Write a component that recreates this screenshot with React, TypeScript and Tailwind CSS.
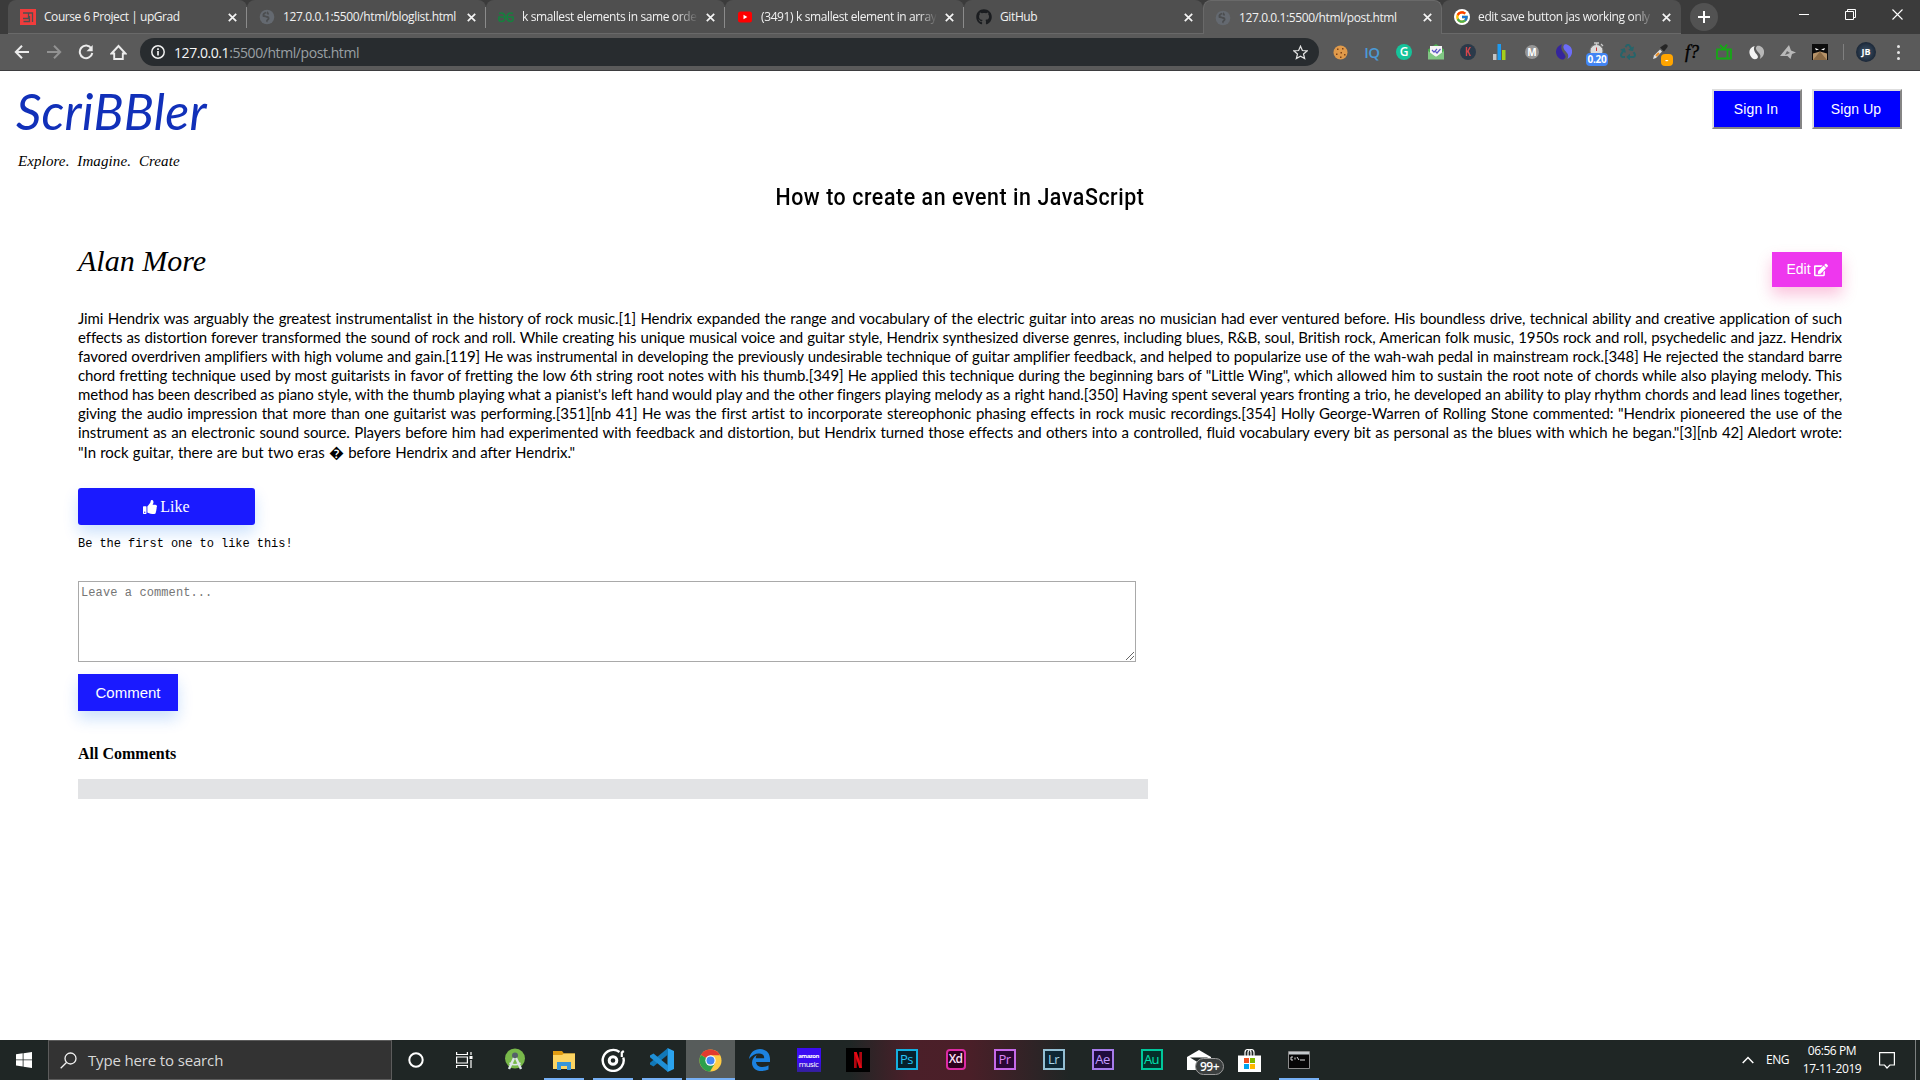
import React from "react";
import { FaThumbsUp, FaGithub, FaRecycle, FaEdit } from "react-icons/fa";
import { FcGoogle } from "react-icons/fc";

const lines = [
  "Jimi Hendrix was arguably the greatest instrumentalist in the history of rock music.[1] Hendrix expanded the range and vocabulary of the electric guitar into areas no musician had ever ventured before. His boundless drive, technical ability and creative application of such",
  "effects as distortion forever transformed the sound of rock and roll. While creating his unique musical voice and guitar style, Hendrix synthesized diverse genres, including blues, R&B, soul, British rock, American folk music, 1950s rock and roll, psychedelic and jazz. Hendrix",
  "favored overdriven amplifiers with high volume and gain.[119] He was instrumental in developing the previously undesirable technique of guitar amplifier feedback, and helped to popularize use of the wah-wah pedal in mainstream rock.[348] He rejected the standard barre",
  "chord fretting technique used by most guitarists in favor of fretting the low 6th string root notes with his thumb.[349] He applied this technique during the beginning bars of \"Little Wing\", which allowed him to sustain the root note of chords while also playing melody. This",
  "method has been described as piano style, with the thumb playing what a pianist's left hand would play and the other fingers playing melody as a right hand.[350] Having spent several years fronting a trio, he developed an ability to play rhythm chords and lead lines together,",
  "giving the audio impression that more than one guitarist was performing.[351][nb 41] He was the first artist to incorporate stereophonic phasing effects in rock music recordings.[354] Holly George-Warren of Rolling Stone commented: \"Hendrix pioneered the use of the",
  "instrument as an electronic sound source. Players before him had experimented with feedback and distortion, but Hendrix turned those effects and others into a controlled, fluid vocabulary every bit as personal as the blues with which he began.\"[3][nb 42] Aledort wrote:",
];

const Globe = () => (
  <svg width="16" height="16" viewBox="0 0 16 16">
    <circle cx="8" cy="8" r="7.3" fill="#646970" />
    <path d="M7 3.500C5 4 4 5.500 4.500 7c1.500-.2 2.400.8 4 1 1.500.3 1.400 2 .2 2.700-1 .6-.6 1.500-1.200 2M9 3c-1 1-.4 1.800.8 1.900" fill="none" stroke="#4c4e50" strokeWidth="1.800" />
  </svg>
);
const UpGrad = () => (
  <svg width="16" height="16" viewBox="0 0 16 16">
    <path fill="#f13c3c" d="M0 0h16v16H0z" />
    <path d="M3 4h9.500v9M8.500 4v5.500H3M9.500 7v5.500H3.500" fill="none" stroke="#4f4f4f" strokeWidth="1.300" />
  </svg>
);
const Geeks = () => (
  <svg width="16" height="16" viewBox="0 0 16 16" fill="none" stroke="#16803e" strokeWidth="1.600">
    <path d="M1 4.500c4-1.500 6 1 6 3.500s-1.500 4.500-4 4.500S.8 10.500 1 8h6M15 4.500c-4-1.500-6 1-6 3.500s1.500 4.500 4 4.500 2.200-2 2-4.500H9" />
  </svg>
);
const YouTube = () => (
  <svg width="16" height="16" viewBox="0 0 16 16">
    <rect x="1" y="2.500" width="14" height="11" rx="2.500" fill="#f00" />
    <path d="M6.500 5.800v4.400L10.300 8z" fill="#fff" />
  </svg>
);
const Google = () => (
  <span className="flex size-4 items-center justify-center rounded-full bg-white"><FcGoogle size={14} /></span>
);

const Close = () => (
  <svg className="shrink-0" width="9" height="9" viewBox="0 0 9 9"><path d="M.8.8l7.400 7.400M8.200.8L.8 8.200" stroke="#f4f4f4" strokeWidth="1.700" /></svg>
);

const tabs = [
  { icon: <UpGrad />, label: "Course 6 Project | upGrad", cls: "tracking-[-0.45px]" },
  { icon: <Globe />, label: "127.0.0.1:5500/html/bloglist.html", cls: "tracking-[-0.36px]" },
  { icon: <Geeks />, label: "k smallest elements in same orde", cls: "tracking-[-0.38px] [mask-image:linear-gradient(to_right,black_88%,transparent_100%)]" },
  { icon: <YouTube />, label: "(3491) k smallest element in array", cls: "tracking-[-0.38px] [mask-image:linear-gradient(to_right,black_90%,transparent_100%)]" },
  { icon: <FaGithub size={16} color="#1b1d20" />, label: "GitHub", cls: "tracking-[-0.38px]" },
  { icon: <Globe />, label: "127.0.0.1:5500/html/post.html", cls: "tracking-[-0.4px]", active: true },
  { icon: <Google />, label: "edit save button jas working only", cls: "tracking-[-0.36px] [mask-image:linear-gradient(to_right,black_88%,transparent_100%)]" },
];

function TabStrip() {
  return (
    <div className="flex h-[34px] bg-[#3b3b3b] pl-2">
      {tabs.map((t, i) => (
        <div
          key={i}
          className={
            "flex h-[34px] w-[239px] shrink-0 items-center rounded-t-lg " +
            (t.active ? "border-x border-t border-[#696969] bg-[#5a5a5a] pl-[11px] pr-[10px]" : "border-b border-[#696969] bg-[#4f4f4f] pl-3 pr-[11px] pt-px")
          }
        >
          <span className="flex w-4 shrink-0 justify-center">{t.icon}</span>
          <span className={"ml-2 w-[176px] shrink-0 whitespace-nowrap text-[12px] text-[#f1f1f1] " + t.cls}>{t.label}</span>
          <span className="ml-2"><Close /></span>
          {i < 4 && <span className="-mr-[11px] ml-auto h-[21px] w-px bg-[#8b8b8b]" />}
        </div>
      ))}
      <div className="ml-[9px] mt-[3px] flex size-7 items-center justify-center rounded-full bg-[#525252]">
        <svg width="12" height="12" viewBox="0 0 12 12"><path d="M6 0v12M0 6h12" stroke="#fff" strokeWidth="2" /></svg>
      </div>
      <div className="ml-auto flex h-7 items-center gap-9 pr-[17px]">
        <svg width="10" height="10" viewBox="0 0 10 10"><path d="M0 5.500h10" stroke="#fff" /></svg>
        <svg width="11" height="11" viewBox="0 0 11 11" fill="none" stroke="#fff"><path d="M.5 2.500h8v8h-8zM2.500 2.500v-2h8v8h-2" /></svg>
        <svg width="11" height="11" viewBox="0 0 11 11"><path d="M.5.5l10 10M10.500.5l-10 10" stroke="#fff" strokeWidth="1.100" /></svg>
      </div>
    </div>
  );
}

const Ext = ({ children }: { children: React.ReactNode }) => (
  <span className="relative flex h-7 w-8 shrink-0 items-center justify-center">{children}</span>
);

function Toolbar() {
  return (
    <div className="flex h-[37px] items-center border-b border-[#3d3d3f] bg-[#5a5a5a]">
      <div className="flex w-[140px] items-center gap-4 pl-[14px]">
        <svg width="16" height="16" viewBox="0 0 16 16" fill="none" stroke="#ececec" strokeWidth="2"><path d="M15 8H2.500M8 1.700L1.800 8 8 14.300" /></svg>
        <svg width="16" height="16" viewBox="0 0 16 16" fill="none" stroke="#929292" strokeWidth="2"><path d="M1 8h12.500M8 1.700L14.200 8 8 14.300" /></svg>
        <svg width="16" height="16" viewBox="0 0 16 16"><path d="M13.300 4.300A6.300 6.300 0 1 0 14.300 9" fill="none" stroke="#ececec" strokeWidth="2" /><path d="M14.700 1v6.300H8.500z" fill="#ececec" /></svg>
        <svg width="17" height="17" viewBox="0 0 17 17" fill="none" stroke="#ececec" strokeWidth="1.900"><path d="M1.500 9.500L8.500 2l7 7.500h-2.700V15H4.200V9.500z" /></svg>
      </div>
      <div className="flex h-7 w-[1179px] items-center rounded-full bg-[#282c2f] pl-[11px] pr-[11px]">
        <svg width="14" height="14" viewBox="0 0 14 14"><circle cx="7" cy="7" r="6.200" fill="none" stroke="#f0f0f0" strokeWidth="1.500" /><path d="M7 6v4.500M7 3.300v1.600" stroke="#f0f0f0" strokeWidth="1.700" /></svg>
        <span className="ml-[9px] whitespace-nowrap text-[14px] tracking-[-0.43px] text-[#9aa0a4]"><span className="text-[#f6f6f6]">127.0.0.1</span>:5500/html/post.html</span>
        <svg className="ml-auto" width="15" height="15" viewBox="0 0 16 16"><path d="M8 1.300l2 4.600 5 .4-3.800 3.300 1.200 4.900L8 11.900l-4.400 2.600 1.200-4.900L1 6.300l5-.4z" fill="none" stroke="#e4e4e4" strokeWidth="1.300" /></svg>
      </div>
      <div className="ml-[5px] flex items-center">
        <Ext><svg width="15" height="15" viewBox="0 0 15 15"><circle cx="7.500" cy="7.500" r="7" fill="#e09a4a" /><path d="M4 3.500h1.500V5H4zM9 3h1.500v1.500H9zM3 8.500h1.500V10H3zM7.500 7H9v1.500H7.500zM11 9h1.500v1.500H11zM7 11.500h1.500V13H7z" fill="#7c4218" /></svg></Ext>
        <Ext><span className="text-[15px] font-semibold tracking-tight text-[#4b9ad6]">IQ</span></Ext>
        <Ext><span className="flex size-4 items-center justify-center rounded-full bg-[#15c39a] text-[12px] font-semibold text-white">G</span></Ext>
        <Ext><svg width="16" height="16" viewBox="0 0 16 16"><path d="M0 5.500L8 0l8 5.500V15H0z" fill="#4caf50" /><path d="M2 2h12v8l-6 3-6-3z" fill="#f5f5f5" /><path d="M0 7l8 6 8-6v8.500H0z" fill="#81c784" /><path d="M4 6l2 2.200L9 5M7.500 7.500L9 9l3.500-4" fill="none" stroke="#5c55c8" strokeWidth="1.200" /></svg></Ext>
        <Ext><span className="flex size-4 items-center justify-center rounded-full bg-[#2b3a4a] text-[12px] font-bold text-[#d8454b]"><span className="scale-x-75">K</span></span></Ext>
        <Ext><svg width="14" height="16" viewBox="0 0 14 16"><path d="M0 10h3.500v6H0z" fill="#c4c4c4" /><path d="M4.500 0H8v16H4.500z" fill="#1e9bf0" /><path d="M9 6h3.500v10H9z" fill="#a4cf1c" /></svg></Ext>
        <Ext><span className="flex size-[14px] items-center justify-center rounded-full bg-[#969696] text-[10px] font-bold text-white">M</span></Ext>
        <Ext><svg width="16" height="16" viewBox="0 0 16 16"><path d="M6 0C-1 3-2 10 3.500 14.500 6 16.500 9 15.500 9.500 13 10 10 3 7 6 0z" fill="#35259c" /><path d="M8.500.5c-3 3 .5 6 2.500 8.500s1 4 .5 6C17 12 17.500 5 13.500 2 11.500.5 10 0 8.500.5z" fill="#6c6cf8" /></svg></Ext>
        <Ext>
          <svg className="mb-1" width="15" height="16" viewBox="0 0 15 16"><circle cx="7.500" cy="9" r="6.500" fill="#dcdcdc" stroke="#777" /><path d="M5 1h5M7.500 1v2M12 2l2 2" stroke="#c9c9c9" strokeWidth="1.300" /><path d="M7.500 9V5.500" stroke="#c33" /></svg>
          <span className="absolute left-[6px] top-[15px] flex h-[13px] w-[22px] items-center justify-center rounded-sm bg-[#4285f4] text-[10px] font-bold tracking-tight text-white">0.20</span>
        </Ext>
        <Ext><FaRecycle size={16} color="#26646a" /></Ext>
        <Ext>
          <svg width="16" height="16" viewBox="0 0 16 16"><path d="M1 15l1-3.500L8 5.500 10 7.500 4 14z" fill="#e1e1e1" /><path d="M4 12l3-3" stroke="#ec8f23" strokeWidth="2" /><path d="M8 3.500l4 4 3.500-4.500c.8-2-1-3.500-3-2.500z" fill="#252525" /></svg>
          <span className="absolute left-[17px] top-[16px] flex h-[12px] w-[12px] items-center justify-center rounded-sm bg-[#ffa500] text-[9px] font-bold text-white">-</span>
        </Ext>
        <Ext><span className="font-['Liberation_Serif',serif] text-[18px] italic text-black [-webkit-text-stroke:0.4px_black]">f?</span></Ext>
        <Ext><svg width="16" height="16" viewBox="0 0 16 16" fill="none" stroke="#16a816" strokeWidth="1.800"><path d="M1 5.500h14v9H1zM11.500 6v8M4 1l4 4 3-4.500" /></svg></Ext>
        <Ext><svg width="15" height="15" viewBox="0 0 16 16"><path d="M6 1C-1 3-1 10 3.500 14 6 16 9 15 9.500 13 10 10 3 7 6 1z" fill="#f3f3f3" /><path d="M8.500 1c-3 3 .5 5.500 2.500 8s1 4 .5 6C17 12 17.500 5 13.500 2 11.500.5 10 .5 8.500 1z" fill="#b7b7b7" /></svg></Ext>
        <Ext><svg width="16" height="16" viewBox="0 0 16 16"><path d="M0 12L9 1l2 5.500 5 2-4 1.500L10.500 15l-3-3z" fill="#b9b9b9" /><path d="M7 7l3 2-5 2z" fill="#666" /></svg></Ext>
        <Ext><svg width="16" height="16" viewBox="0 0 16 16"><path fill="#0c0c0c" d="M0 0h16v16H0z" /><path d="M1 9.500l7-2 7 2V16H1z" fill="#b79368" /><path d="M8 7.500L15 16H1z" fill="#8a6a45" /><path d="M3 4l4 1.500-3 .8zM13 4L9 5.500l3 .8z" fill="#fff" /></svg></Ext>
      </div>
      <span className="ml-[7px] h-4 w-px bg-[#808080]" />
      <span className="ml-[12px] flex size-5 items-center justify-center rounded-full bg-[radial-gradient(circle,#40566c,#0c1422)] text-[9px] font-bold text-white">JB</span>
      <span className="ml-[21px] flex w-[3px] flex-col gap-[3px]">
        <i className="size-[3px] rounded-full bg-[#e6e6e6]" /><i className="size-[3px] rounded-full bg-[#e6e6e6]" /><i className="size-[3px] rounded-full bg-[#e6e6e6]" />
      </span>
    </div>
  );
}

const signButton =
  "h-10 w-[90px] border-2 border-solid border-b-[#858585] border-l-[#dedede] border-r-[#858585] border-t-[#dedede] bg-[#0000ff] pr-[2px] font-['Liberation_Sans',sans-serif] text-[14px] tracking-[0.1px] text-white";

function Page() {
  return (
    <main className="flex h-[969px] flex-col bg-white text-black">
      <header className="flex h-[109px] justify-between pl-4 pr-[18px]">
        <div className="flex flex-col whitespace-nowrap">
          <h1 className="mt-[10px] h-[60px] font-['Lato',sans-serif] text-[50px] italic leading-[60px] tracking-[0.3px] text-[#1130b9]">ScriBBler</h1>
          <p className="ml-[2px] mt-[10px] h-5 font-['Liberation_Serif',serif] text-[15px] italic leading-5 tracking-[0.1px] [word-spacing:4px]">Explore. Imagine. Create</p>
        </div>
        <div className="flex gap-[10px] pt-[18px]">
          <button className={signButton}>Sign In</button>
          <button className={signButton}>Sign Up</button>
        </div>
      </header>
      <h2 className="h-[34px] scale-x-[0.89] whitespace-nowrap text-center font-['Roboto',sans-serif] text-[24px] font-medium leading-[34px] tracking-[0.65px]">How to create an event in JavaScript</h2>
      <article className="mx-[78px] mt-[30px] flex flex-col">
        <div className="flex h-[65px] items-start justify-between">
          <h3 className="whitespace-nowrap font-['Liberation_Serif',serif] text-[30px] italic leading-[34px]">Alan More</h3>
          <button className="mt-2 flex h-[35px] w-[70px] items-center justify-center gap-[3px] bg-[#ee37ee] font-['Liberation_Sans',sans-serif] text-[14px] text-white shadow-[0_8px_15px_rgba(238,20,120,0.25)]">Edit <FaEdit size={14} /></button>
        </div>
        <div className="font-['Lato',sans-serif] text-[15px] leading-[19px]">
          {lines.map((l, i) => (
            <p key={i} className="whitespace-nowrap tracking-[-0.11px] [text-align-last:justify]">{l}</p>
          ))}
          <p className="mt-px whitespace-nowrap [word-spacing:0.35px]">"In rock guitar, there are but two eras � before Hendrix and after Hendrix."</p>
        </div>
        <button className="mt-[26px] flex h-[37px] w-[177px] items-center justify-center gap-[3px] rounded-[3px] bg-[#1a1aff] pt-px font-['Liberation_Serif',serif] text-[16px] text-white shadow-[0_8px_15px_rgba(0,112,240,0.2)]"><FaThumbsUp size={14} /> Like</button>
        <p className="mt-[11px] h-4 whitespace-nowrap font-['Liberation_Mono',monospace] text-[12px] leading-4 tracking-[-0.05px]">Be the first one to like this!</p>
        <div className="mt-[29px] flex h-[81px] w-[1058px] items-end justify-between border border-[#a9a9a9] pl-[2px]">
          <span className="self-start pt-[3px] font-['Liberation_Mono',monospace] text-[12px] leading-4 tracking-[0.1px] text-[#757575]">Leave a comment...</span>
          <svg width="10" height="10" viewBox="0 0 10 10"><path d="M1 9l8-8M5 9l4-4" stroke="#666" /></svg>
        </div>
        <button className="mt-3 h-[37px] w-[100px] bg-[#1a1aff] pt-[2px] font-['Liberation_Sans',sans-serif] text-[15px] text-white shadow-[0_8px_15px_rgba(0,112,240,0.2)]">Comment</button>
        <h4 className="mt-[33px] h-5 whitespace-nowrap font-['Liberation_Serif',serif] text-[16px] font-bold leading-5">All Comments</h4>
        <div className="mt-[15px] h-5 w-[1070px] bg-[#e2e3e5]" />
      </article>
    </main>
  );
}

const Slot = ({ children, open, active, line }: { children: React.ReactNode; open?: boolean; active?: boolean; line?: string }) => (
  <span className={"relative flex h-10 w-[49px] shrink-0 items-center justify-center " + (active ? "bg-white/25" : "")}>
    {children}
    {open && <i className={"absolute bottom-0 h-[2px] bg-[#76b0f5] " + (line ?? "w-10")} />}
  </span>
);
const Adobe = ({ t, cls }: { t: string; cls: string }) => (
  <Slot><span className={"mb-[2px] flex h-[21px] w-[22px] items-center justify-center border-2 text-[13px] leading-none tracking-[-0.6px] " + cls}>{t}</span></Slot>
);

function Taskbar() {
  return (
    <footer className="flex h-10 items-center bg-[linear-gradient(to_right,#1f2625_850px,#4b1f29_910px,#4a1f28_970px,#1f2625_1070px)] text-white">
      <span className="flex w-12 justify-center"><svg width="16" height="16" viewBox="0 0 16 16" fill="#fff"><path d="M0 2.300L6.700 1.300v6.200H0zM7.500 1.200L16 0v7.500H7.500zM0 8.300h6.700v6.200L0 13.600zM7.500 8.300H16V16l-8.500-1.200z" /></svg></span>
      <div className="flex h-10 w-[344px] items-center border border-[#5c5c5c] bg-[#333333] pl-[11px]">
        <svg width="17" height="17" viewBox="0 0 17 17" fill="none" stroke="#f1f1f1" strokeWidth="1.300"><circle cx="10.500" cy="6.500" r="5.500" /><path d="M6.500 10.500L.7 16.300" /></svg>
        <span className="ml-[11px] whitespace-nowrap text-[15px] tracking-[-0.15px] text-[#d8d8d8]">Type here to search</span>
      </div>
      <span className="flex w-12 justify-center"><svg width="16" height="16" viewBox="0 0 16 16"><circle cx="8" cy="8" r="6.700" fill="none" stroke="#fff" strokeWidth="2" /></svg></span>
      <span className="flex w-[50px] justify-center pr-[2px]"><svg width="17" height="16" viewBox="0 0 17 16" fill="none" stroke="#fff" strokeWidth="1.200"><path d="M.6 0v2.500h10.800V0M.6 5h10.800v6H.6zM.6 16v-2.500h10.800V16M15 0v3M15 8v8" /><path d="M13.500 4h3v3h-3z" fill="#fff" stroke="none" /></svg></span>
      <Slot><svg width="22" height="24" viewBox="0 0 22 24"><circle cx="11" cy="10.500" r="10" fill="#78b84a" /><circle cx="11" cy="7.500" r="3" fill="#55606a" /><path d="M10 10L5 21M12 10l5 11" stroke="#dce5e8" strokeWidth="2.400" /><path d="M5.500 15q5.500 3.500 11 0" fill="none" stroke="#dce5e8" strokeWidth="1.500" /></svg></Slot>
      <Slot open><svg width="22" height="19" viewBox="0 0 22 19"><path d="M0 0h9l2 2.500h11V18H0z" fill="#e09c12" /><path d="M0 4h9l2-1.500h11V18H0z" fill="#fcd462" /><path d="M4 11h14v8h-4v-4H8v4H4z" fill="#3695d8" /></svg></Slot>
      <Slot open><svg width="24" height="24" viewBox="0 0 24 24" fill="none" stroke="#fff"><path d="M18.500 4A10.500 10.500 0 1 0 22.300 9.500" strokeWidth="2.400" /><circle cx="12" cy="12.500" r="3.800" strokeWidth="3" /><path d="M20.800 9V4.500l2-1.500" strokeWidth="2.200" /></svg></Slot>
      <Slot open>
        <svg width="24" height="24" viewBox="0 0 24 24"><path d="M17.500 0L24 3v18l-6.500 3z" fill="#2ba3ee" /><path d="M18 0v6.500L3.500 18.500 0 16.500v-1.700z" fill="#1178b8" /><path d="M18 24v-6.500L3.500 5.500 0 7.500v1.700z" fill="#1f8fd6" /></svg>
      </Slot>
      <Slot active open line="w-[49px]">
        <svg width="23" height="23" viewBox="0 0 24 24"><circle cx="12" cy="12" r="11.500" fill="#fc4" /><path d="M12 12L2 6.300A11.500 11.500 0 0 1 22 6.500H12z" fill="#e33b2e" /><path d="M2 6.300A11.500 11.500 0 0 0 11.500 23.500L16.500 15 12 12z" fill="#2da04c" /><circle cx="12" cy="12" r="5.400" fill="#fff" /><circle cx="12" cy="12" r="4.200" fill="#4587f3" /></svg>
      </Slot>
      <Slot><svg width="21" height="22" viewBox="0 0 21 22"><path d="M0 10C1 3.500 5.500 0 11 0c6 0 10 4 10 10v3H7c.3 3 2.700 5 6.500 5 2.500 0 4.500-.6 6-1.700v4.200C17.500 21.500 15 22 12.500 22 6.500 22 3 18.500 3 13.700c0-3.300 2-6.200 5-7.700C7 7 6.800 8.200 6.800 9.200h8.400C15.200 6 13.500 4.500 10 4.500 6 4.500 2.500 6.500 0 10z" fill="#1c82e0" /></svg></Slot>
      <Slot><span className="flex h-6 w-6 flex-col items-center justify-center bg-[linear-gradient(#3c0cf2_55%,#33209a)] text-[8px] leading-[8px] tracking-[-0.5px]"><span className="text-[6px] font-bold leading-[7px]">amazon</span><span>music</span></span></Slot>
      <Slot><svg width="24" height="24" viewBox="0 0 24 24"><path d="M0 0h24v24H0z" /><path d="M8 4h2.700v16H8zM13.300 4H16v16h-2.700z" fill="#b00610" /><path d="M8 4h2.700L16 20h-2.700z" fill="#e50914" /></svg></Slot>
      <Adobe t="Ps" cls="border-[#14b0e0] bg-[#06202c] text-[#27c5f4]" />
      <Slot><span className="mb-[2px] flex h-[21px] w-[20px] items-center justify-center rounded-[4px] border-2 border-[#dd2ba5] bg-[#2e001e] text-[12px] font-semibold leading-none tracking-[-0.6px] text-[#ffe0f6]">Xd</span></Slot>
      <Adobe t="Pr" cls="border-[#c669e8] bg-[#2a0633] text-[#dc83f5]" />
      <Adobe t="Lr" cls="border-[#93bed3] bg-[#0d2634] text-[#a9d5e8]" />
      <Adobe t="Ae" cls="border-[#a67bea] bg-[#1f0a3c] text-[#c49bff]" />
      <Adobe t="Au" cls="border-[#00c79b] bg-[#04302a] text-[#00e4b0]" />
      <Slot>
        <svg className="mr-1" width="24" height="20" viewBox="0 0 24 20"><path d="M0 7L12 0l12 7v13H0z" fill="#fff" /><path d="M3 7.500h18L12 13z" fill="#1f2625" /></svg>
        <span className="absolute left-[19px] top-[18px] flex h-[17px] w-[29px] items-center justify-center rounded-full border border-[#9a9a9a] bg-[#3b3f3f] text-[12px] font-semibold tracking-[-0.5px]">99+</span>
      </Slot>
      <Slot><svg width="23" height="23" viewBox="0 0 23 23"><path d="M0 6.500h23V23H0z" fill="#fff" /><path d="M7 7V3.500a3 3 0 0 1 6 0V7M10 7V3.500a3 3 0 0 1 6 0V7" fill="none" stroke="#fff" strokeWidth="1.200" /><path d="M6 9h5v5H6z" fill="#f25022" /><path d="M12 9h5v5h-5z" fill="#7fba00" /><path d="M6 15h5v5H6z" fill="#00a4ef" /><path d="M12 15h5v5h-5z" fill="#ffb900" /></svg></Slot>
      <Slot open><svg width="22" height="18" viewBox="0 0 22 18"><path d="M.5.5h21v17H.5z" fill="#060606" stroke="#8c8c8c" /><path d="M1 1h20v2.500H1z" fill="#c4c9cc" /><path d="M5 6H3v3h2M7 6.500v2M9 6l2 3M12 9h5" stroke="#ddd" fill="none" /></svg></Slot>
      <div className="ml-auto flex items-center">
        <svg width="12" height="8" viewBox="0 0 12 8"><path d="M.7 7L6 1.500 11.300 7" fill="none" stroke="#fff" strokeWidth="1.500" /></svg>
        <span className="ml-3 w-6 whitespace-nowrap text-[12px] tracking-[-0.5px]">ENG</span>
        <div className="ml-[9px] flex w-[66px] flex-col items-center whitespace-nowrap text-[12px] leading-[18px] tracking-[-0.4px]"><span>06:56 PM</span><span>17-11-2019</span></div>
        <svg className="ml-[14px]" width="16" height="17" viewBox="0 0 16 17"><path d="M.6.600h14.800v12.400h-4.500L8 16l-2.500-3H.6z" fill="none" stroke="#fff" strokeWidth="1.200" /></svg>
        <span className="ml-5 mr-1 h-10 w-px bg-[#7c8080]" />
      </div>
    </footer>
  );
}

export default function App() {
  return (
    <div className="flex h-[1080px] w-[1920px] flex-col overflow-hidden font-['Open_Sans','Noto_Sans',sans-serif]">
      <TabStrip />
      <Toolbar />
      <Page />
      <Taskbar />
    </div>
  );
}
